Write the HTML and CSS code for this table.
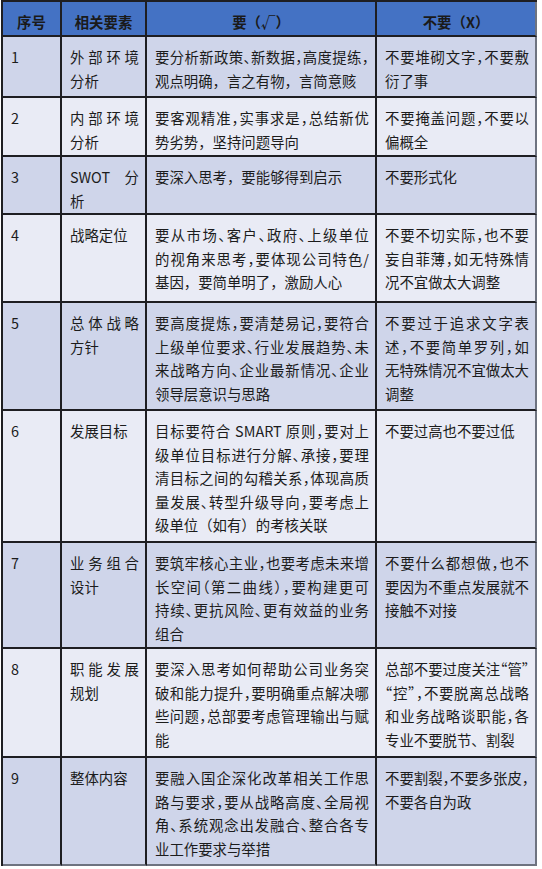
FILE: index.html
```html
<!DOCTYPE html>
<html lang="zh-CN">
<head>
<meta charset="utf-8">
<title>战略规划要素</title>
<link rel="stylesheet" href="styles.css">
</head>
<body>
<table class="grid">
  <colgroup>
    <col class="c-no"><col class="c-item"><col class="c-do"><col class="c-dont">
  </colgroup>
  <thead>
    <tr class="head">
      <th>序号</th><th>相关要素</th><th>要（√）</th><th>不要（X）</th>
    </tr>
  </thead>
  <tbody>
    <tr class="odd r1">
      <td>1</td>
      <td><span class="ln">外部环境</span><span class="ln">分析</span></td>
      <td><span class="ln">要分析新政策、新数据，高度提练，</span><span class="ln">观点明确，言之有物，言简意赅</span></td>
      <td><span class="ln">不要堆砌文字，不要敷</span><span class="ln">衍了事</span></td>
    </tr>
    <tr class="even r2">
      <td>2</td>
      <td><span class="ln">内部环境</span><span class="ln">分析</span></td>
      <td><span class="ln">要客观精准，实事求是，总结新优</span><span class="ln">势劣势，坚持问题导向</span></td>
      <td><span class="ln">不要掩盖问题，不要以</span><span class="ln">偏概全</span></td>
    </tr>
    <tr class="odd r3">
      <td>3</td>
      <td><span class="ln">SWOT 分</span><span class="ln">析</span></td>
      <td><span class="ln">要深入思考，要能够得到启示</span></td>
      <td><span class="ln">不要形式化</span></td>
    </tr>
    <tr class="even r4">
      <td>4</td>
      <td><span class="ln">战略定位</span></td>
      <td><span class="ln">要从市场、客户、政府、上级单位</span><span class="ln">的视角来思考，要体现公司特色/</span><span class="ln">基因，要简单明了，激励人心</span></td>
      <td><span class="ln">不要不切实际，也不要</span><span class="ln">妄自菲薄，如无特殊情</span><span class="ln">况不宜做太大调整</span></td>
    </tr>
    <tr class="odd r5">
      <td>5</td>
      <td><span class="ln">总体战略</span><span class="ln">方针</span></td>
      <td><span class="ln">要高度提炼，要清楚易记，要符合</span><span class="ln">上级单位要求、行业发展趋势、未</span><span class="ln">来战略方向、企业最新情况、企业</span><span class="ln">领导层意识与思路</span></td>
      <td><span class="ln">不要过于追求文字表</span><span class="ln">述，不要简单罗列，如</span><span class="ln">无特殊情况不宜做太大</span><span class="ln">调整</span></td>
    </tr>
    <tr class="even r6">
      <td>6</td>
      <td><span class="ln">发展目标</span></td>
      <td><span class="ln">目标要符合 SMART 原则，要对上</span><span class="ln">级单位目标进行分解、承接，要理</span><span class="ln">清目标之间的勾稽关系，体现高质</span><span class="ln">量发展、转型升级导向，要考虑上</span><span class="ln">级单位（如有）的考核关联</span></td>
      <td><span class="ln">不要过高也不要过低</span></td>
    </tr>
    <tr class="odd r7">
      <td>7</td>
      <td><span class="ln">业务组合</span><span class="ln">设计</span></td>
      <td><span class="ln">要筑牢核心主业，也要考虑未来增</span><span class="ln">长空间（第二曲线），要构建更可</span><span class="ln">持续、更抗风险、更有效益的业务</span><span class="ln">组合</span></td>
      <td><span class="ln">不要什么都想做，也不</span><span class="ln">要因为不重点发展就不</span><span class="ln">接触不对接</span></td>
    </tr>
    <tr class="even r8">
      <td>8</td>
      <td><span class="ln">职能发展</span><span class="ln">规划</span></td>
      <td><span class="ln">要深入思考如何帮助公司业务突</span><span class="ln">破和能力提升，要明确重点解决哪</span><span class="ln">些问题，总部要考虑管理输出与赋</span><span class="ln">能</span></td>
      <td><span class="ln">总部不要过度关注“管”</span><span class="ln">“控”，不要脱离总战略</span><span class="ln">和业务战略谈职能，各</span><span class="ln">专业不要脱节、割裂</span></td>
    </tr>
    <tr class="odd r9">
      <td>9</td>
      <td><span class="ln">整体内容</span></td>
      <td><span class="ln">要融入国企深化改革相关工作思</span><span class="ln">路与要求，要从战略高度、全局视</span><span class="ln">角、系统观念出发融合、整合各专</span><span class="ln">业工作要求与举措</span></td>
      <td><span class="ln">不要割裂，不要多张皮，</span><span class="ln">不要各自为政</span></td>
    </tr>
  </tbody>
</table>
</body>
</html>
```

FILE: styles.css
```css
html, body {
  margin: 0;
  padding: 0;
  background: #ffffff;
}

body {
  font-family: "Noto Sans CJK SC", "Noto Sans", sans-serif;
  font-size: 14.4px;
  color: #1c1c1c;
}

.grid {
  margin: 0 0 0 1px;
  border-collapse: separate;
  border-spacing: 0;
  table-layout: fixed;
  width: 536px;
  border-top: 2px solid #1e1e22;
  border-left: 2px solid #1e1e22;
}

.c-no { width: 59px; }
.c-item { width: 85px; }
.c-do { width: 230px; }
.c-dont { width: 160px; }

.grid th,
.grid td {
  box-sizing: border-box;
  border-right: 2px solid #1e1e22;
  border-bottom: 2px solid #1e1e22;
  vertical-align: top;
  line-height: 23.5px;
  padding: 8px 6px 0 8px;
  text-align: left;
}

.grid th:last-child,
.grid td:last-child {
  border-right-color: #6e7380;
}

.grid tbody tr:last-child td {
  border-bottom-color: #6e7380;
}

.head th {
  background: #4472c4;
  color: #1a1a1a;
  font-weight: 700;
  text-align: center;
  line-height: 24px;
  padding: 8px 0 0;
  height: 35px;
}

.odd td { background: #cfd5ea; }
.even td { background: #e9ebf5; }

.ln {
  display: block;
  white-space: nowrap;
}

.ln:not(:last-child) {
  text-align: justify;
  text-align-last: justify;
  font-feature-settings: "halt";
}

.r1 td { height: 61px; }
.r2 td { height: 59px; }
.r3 td { height: 58px; }
.r4 td { height: 88px; }
.r5 td { height: 108px; }
.r6 td { height: 132px; }
.r7 td { height: 106px; }
.r8 td { height: 109px; }
.r9 td { height: 108px; }
```
